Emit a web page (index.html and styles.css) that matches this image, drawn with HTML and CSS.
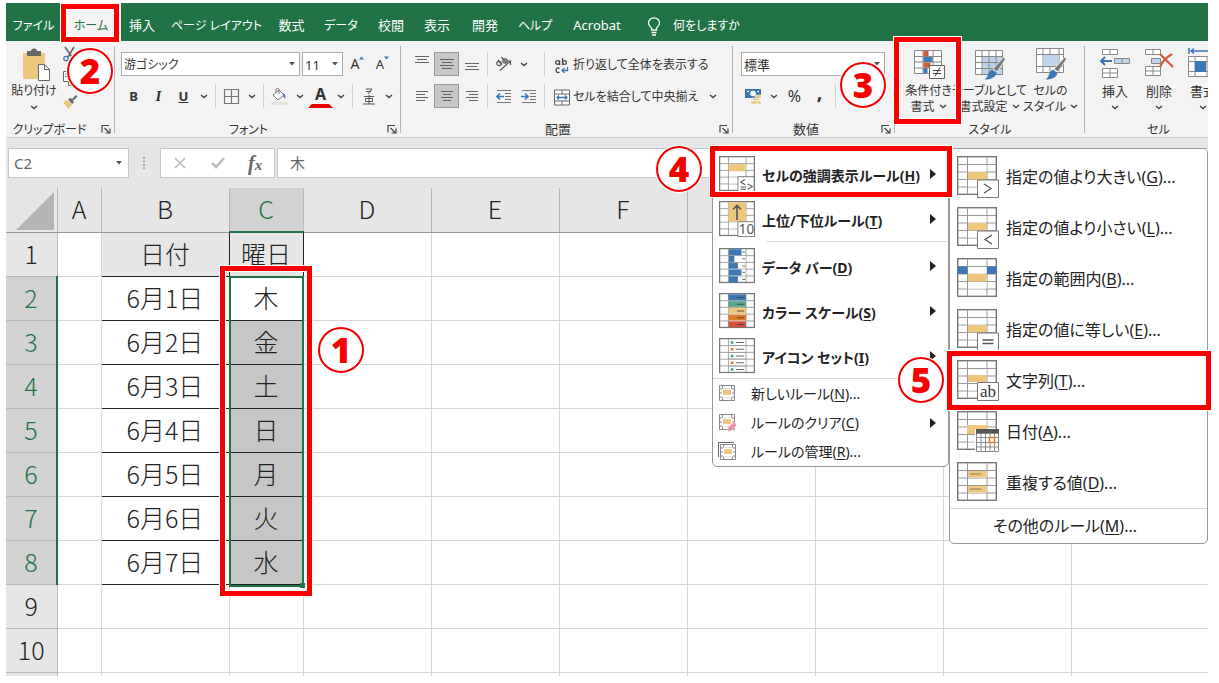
FILE: index.html
```
<!DOCTYPE html>
<html lang="ja">
<head>
<meta charset="utf-8">
<title>条件付き書式</title>
<link rel="stylesheet" href="styles.css">
</head>
<body>
<svg class="defs" aria-hidden="true">
  <symbol id="caret" viewBox="0 0 8 5"><path d="M1 1l3 2.6L7 1" fill="none" stroke="#444" stroke-width="1.4"/></symbol>
  <symbol id="tri" viewBox="0 0 6 4"><path d="M0 0h6L3 3.5z" fill="#555"/></symbol>
  <symbol id="sub" viewBox="0 0 6 10"><path d="M0 0l6 5-6 5z" fill="#222"/></symbol>
  <symbol id="launch" viewBox="0 0 10 10"><path d="M1 8.500V1.500h7M3.500 4l4.500 4.500M9 4.500V9H4.500" fill="none" stroke="#444" stroke-width="1.200"/></symbol>
  <symbol id="grid" viewBox="0 0 40 40"><rect x=".7" y=".7" width="38.600" height="37.600" fill="#fff" stroke="#777" stroke-width="1.400"/><path d="M1 8.500h38M1 16h38M1 23.500h38M1 31h38M10.500 1v37M30 1v37" stroke="#999" fill="none"/><path d="M11 9h18.500v6.500H11zM11 24h18.500v6.500H11z" fill="#fff"/></symbol>
  <symbol id="mini" viewBox="0 0 17 17"><path d="M.5.500h15v15H.5zM.5 4h15M.5 8h15M.5 12h15M3.500.500v15M12.500.500v15" fill="#fff" stroke="#888"/><path d="M3 3.500h10v9H3z" fill="#fff"/><path d="M4 5h8v5H4z" fill="#edc77e"/></symbol>
</svg>
<div class="page">
<div class="app">
  <nav class="tabs">
    <button class="kana">ファイル</button><button class="on kana">ホーム</button><button>挿入</button><button class="kana">ページ レイアウト</button><button>数式</button><button class="kana">データ</button><button>校閲</button><button>表示</button><button>開発</button><button class="kana">ヘルプ</button><button>Acrobat</button>
    <button class="ask kana"><svg width="14" height="19" viewBox="0 0 14 19"><path d="M4.500 13v-2C3 9.500 1.500 8.500 1.500 6a5.500 5.200 0 0 1 11 0c0 2.500-1.500 3.500-3 5v2zM4.500 15.500h5M5 18h4" fill="none" stroke="#fff" stroke-width="1.300"/></svg>何をしますか</button>
  </nav>

  <div class="ribbon">
    <section class="group clip">
      <div class="body">
        <button class="big paste"><svg width="29" height="33" viewBox="0 0 29 33"><path d="M1 4h22v26H1z" fill="#edc77e"/><path d="M5 2h4a3 2.500 0 0 1 6 0h4v5H5z" fill="#666"/><path d="M16.500 15.500h6l5 5v11h-11z" fill="#fff" stroke="#666"/><path d="M22.500 15.500v5h5" fill="none" stroke="#666"/></svg><span>貼り付け</span><svg class="caret"><use href="#caret"/></svg></button>
        <div class="stack">
          <button aria-label="切り取り"><svg width="16" height="16" viewBox="0 0 16 16"><path d="M3 1l7 10M12 1L6 11" stroke="#666" stroke-width="1.600"/><circle cx="4" cy="12.500" r="2.200" fill="none" stroke="#3d78b5" stroke-width="1.300"/><circle cx="11.500" cy="12.500" r="2.200" fill="none" stroke="#3d78b5" stroke-width="1.300"/></svg></button>
          <button aria-label="コピー"><svg width="16" height="16" viewBox="0 0 16 16"><path d="M1.500 1.500h7v10h-7zM6.500 4.500h5l3 3v8h-8z" fill="#fff" stroke="#666"/><path d="M3 4h3M3 6.500h3M8.500 9h4M8.500 11.500h4" stroke="#3d78b5"/></svg></button>
          <button aria-label="書式のコピー"><svg width="16" height="16" viewBox="0 0 16 16"><path d="M1 8l5-2 4 5-4 4c-1-2-3-5-5-7z" fill="#edc77e"/><path d="M6 5l4 5 2-2-3-4zM10 5l4-4 1.500 1.500-4 4z" fill="#666"/></svg></button>
        </div>
      </div>
      <footer class="kana">クリップボード<button class="launch" aria-label="クリップボードの設定"><svg><use href="#launch"/></svg></button></footer>
    </section>

    <section class="group font">
      <div class="body rows">
        <div class="row">
          <label class="combo wide"><select class="kana" aria-label="フォント"><option>游ゴシック</option></select><svg><use href="#tri"/></svg></label>
          <label class="combo size"><select aria-label="サイズ"><option>11</option></select><svg><use href="#tri"/></svg></label>
          <button class="w24 grow">A<svg width="5" height="4" viewBox="0 0 5 4"><path d="M0 3.500L2.500.5 5 3.500z" fill="#3d78b5"/></svg></button>
          <button class="w24 grow small">A<svg width="5" height="4" viewBox="0 0 5 4"><path d="M0 .5L2.500 3.500 5 .5z" fill="#3d78b5"/></svg></button>
        </div>
        <div class="row">
          <button class="w24"><b>B</b></button><button class="w24"><i>I</i></button><button class="w24"><u><b>U</b></u></button><button class="w14" aria-label="下線"><svg class="caret"><use href="#caret"/></svg></button><hr>
          <button class="w24" aria-label="罫線"><svg width="15" height="15" viewBox="0 0 15 15"><path d="M.5.500h14v14H.5zM7.500.500v14M.5 7.500h14" fill="none" stroke="#777" stroke-width="1.200"/></svg></button><button class="w14" aria-label="罫線の種類"><svg class="caret"><use href="#caret"/></svg></button><hr>
          <button class="w24" aria-label="塗りつぶし"><svg width="17" height="17" viewBox="0 0 17 17"><path d="M2 7l6-5 5 5-6 5zM5 5V2a1.500 1.500 0 0 1 3 0v4" fill="#fff" stroke="#777"/><path d="M12 5c2 1 3 3 2 6l-2-3z" fill="#3d78b5"/><path d="M0 14h17v3H0z" fill="#e2e2e2"/></svg></button><button class="w14" aria-label="塗りつぶしの色"><svg class="caret"><use href="#caret"/></svg></button>
          <button class="w24 fcolor"><b>A</b></button><button class="w14" aria-label="文字の色"><svg class="caret"><use href="#caret"/></svg></button><hr>
          <button class="w24" aria-label="ふりがな"><svg width="12" height="17" viewBox="0 0 12 17"><path d="M3 1h6L5 6M3 3.500h5M1 8.500h10M0 16h12M6 7v9M2.500 10.500h7v3h-7z" fill="none" stroke="#555"/></svg></button><button class="w14" aria-label="ふりがなの表示"><svg class="caret"><use href="#caret"/></svg></button>
        </div>
      </div>
      <footer class="kana">フォント<button class="launch" aria-label="フォントの設定"><svg><use href="#launch"/></svg></button></footer>
    </section>

    <section class="group align">
      <div class="body rows">
        <div class="row">
          <button class="w24" aria-label="上揃え"><svg width="16" height="16" viewBox="0 0 16 16"><path d="M1 .5h14M3 3.500h10M1 6.500h14" stroke="#666"/></svg></button><button class="w24 sel" aria-label="上下中央揃え"><svg width="16" height="16" viewBox="0 0 16 16"><path d="M1 3.500h14M3 6.500h10M1 9.500h14M3 12.500h10" stroke="#666"/></svg></button><button class="w24" aria-label="下揃え"><svg width="16" height="16" viewBox="0 0 16 16"><path d="M1 7.500h14M3 10.500h10M1 13.500h14" stroke="#666"/></svg></button><hr>
          <button class="w24" aria-label="方向"><svg width="17" height="16" viewBox="0 0 17 16"><g fill="none" stroke="#555" stroke-width="1.200"><circle cx="4" cy="7.500" r="2.200"/><path d="M3 4l4 4.500M6.500 1l5 6"/><circle cx="10" cy="5" r="2.200"/><path d="M5 14.500l10-9M11.500 5H15.500v4"/></g></svg></button><button class="w14" aria-label="文字の方向"><svg class="caret"><use href="#caret"/></svg></button><hr class="far">
          <button class="text"><svg width="16" height="17" viewBox="0 0 16 17"><g fill="none" stroke="#444" stroke-width="1.200"><circle cx="3.500" cy="5.500" r="1.900"/><path d="M5.600 3.500V8M8.500 1v7"/><circle cx="10.500" cy="5.500" r="1.900"/><path d="M5.500 11.500a2.200 2.200 0 1 0 0 3.500"/></g><path d="M13.500 10v3.500H8M10.500 11L8 13.500l2.500 2.500" fill="none" stroke="#3d78b5" stroke-width="1.300"/></svg>折り返して全体を表示する</button>
        </div>
        <div class="row">
          <button class="w24" aria-label="左揃え"><svg width="16" height="16" viewBox="0 0 16 16"><path d="M2 3.500h12M2 6.500h9M2 9.500h12M2 12.500h9" stroke="#666"/></svg></button><button class="w24 sel" aria-label="中央揃え"><svg width="16" height="16" viewBox="0 0 16 16"><path d="M2 3.500h12M4 6.500h8M2 9.500h12M4 12.500h8" stroke="#666"/></svg></button><button class="w24" aria-label="右揃え"><svg width="16" height="16" viewBox="0 0 16 16"><path d="M2 3.500h12M5 6.500h9M2 9.500h12M5 12.500h9" stroke="#666"/></svg></button><hr>
          <button class="w24" aria-label="インデントを減らす"><svg width="16" height="16" viewBox="0 0 16 16"><path d="M1 2.500h14M9 5.500h6M9 8.500h6M9 11.500h6M1 14.500h14" stroke="#777"/><path d="M8 8.500H1M4 5.500l-3 3 3 3" fill="none" stroke="#3d78b5" stroke-width="1.700"/></svg></button><button class="w24" aria-label="インデントを増やす"><svg width="16" height="16" viewBox="0 0 16 16"><path d="M1 2.500h14M9 5.500h6M9 8.500h6M9 11.500h6M1 14.500h14" stroke="#777"/><path d="M0 8.500h7M4 5.500l3 3-3 3" fill="none" stroke="#3d78b5" stroke-width="1.700"/></svg></button><hr>
          <button class="text"><svg width="16" height="17" viewBox="0 0 16 17"><path d="M.5 1h15v15H.5zM.5 5h15M.5 12h15M8 1v4M8 12v4" fill="#fff" stroke="#666"/><path d="M3 8.500h10M5 6.500l-2 2 2 2M11 6.500l2 2-2 2" fill="none" stroke="#3d78b5" stroke-width="1.300"/></svg>セルを結合して中央揃え</button><button class="w14 end" aria-label="結合の種類"><svg class="caret"><use href="#caret"/></svg></button>
        </div>
      </div>
      <footer>配置<button class="launch" aria-label="配置の設定"><svg><use href="#launch"/></svg></button></footer>
    </section>

    <section class="group num">
      <div class="body rows">
        <div class="row"><label class="combo fill"><select aria-label="表示形式"><option>標準</option></select><svg><use href="#tri"/></svg></label></div>
        <div class="row">
          <button class="w24" aria-label="通貨"><svg width="17" height="17" viewBox="0 0 17 17"><path d="M0 1h16v9H0z" fill="#3d78b5"/><circle cx="8" cy="5.500" r="2.800" fill="#fff"/><path d="M2 3h2v1H2zM12 3h2v1h-2z" fill="#fff"/><path d="M10 7h6v2.500h-6zM8 10h6v2.500H8zM6 13h6v3H6zM12 13h4v3h-4z" fill="#edc77e" stroke="#f3f3f3" stroke-width=".5"/></svg></button><button class="w14" aria-label="通貨の種類"><svg class="caret"><use href="#caret"/></svg></button>
          <button class="w24 pct">%</button><button class="w24 comma"><b>,</b></button><hr>
          <button class="w18" aria-label="小数点以下の表示桁数を増やす"><svg width="15" height="14" viewBox="0 0 15 14"><path d="M6 2H0M3 0L0 2l3 2" fill="none" stroke="#3d78b5" stroke-width="1.300"/><g fill="none" stroke="#555"><ellipse cx="6" cy="10.500" rx="1.500" ry="2.500"/><ellipse cx="11" cy="10.500" rx="1.500" ry="2.500"/></g></svg></button><button class="w18" aria-label="小数点以下の表示桁数を減らす"><svg width="15" height="14" viewBox="0 0 15 14"><g fill="none" stroke="#555"><ellipse cx="8" cy="3.500" rx="1.500" ry="2.500"/><ellipse cx="13" cy="3.500" rx="1.500" ry="2.500"/></g><path d="M0 11h6M3 9l3 2-3 2" fill="none" stroke="#3d78b5" stroke-width="1.300"/></svg></button>
        </div>
      </div>
      <footer>数値<button class="launch" aria-label="数値の設定"><svg><use href="#launch"/></svg></button></footer>
    </section>

    <section class="group style">
      <div class="body kana">
        <button class="big"><svg width="32" height="33" viewBox="0 0 32 33"><path d="M1.500 2.500h27v23h-27zM1.500 8.500h27M1.500 14h27M1.500 20h27M10 2.500v23M20 2.500v23" fill="#fff" stroke="#888"/><path d="M10.500 3h5v5h-5zM10.500 14.500h7v5h-7z" fill="#d05a3c"/><path d="M10.500 9h9v5h-9zM10.500 20h4v5h-4z" fill="#3d78b5"/><path d="M16.500 17.500h15v13h-15z" fill="#fff" stroke="#666"/><path d="M20 22.500h8M20 25.500h8M27 19.500l-5 9" stroke="#444"/></svg><span>条件付き</span><span>書式 <svg class="caret"><use href="#caret"/></svg></span></button>
        <button class="big"><svg width="32" height="33" viewBox="0 0 32 33"><path d="M1.500 2.500h27v24h-27z" fill="#fff"/><path d="M8 8h20v18H8z" fill="#bfd4ea"/><path d="M1.500 2.500h27v24h-27zM1.500 8.500h27M1.500 14.500h27M1.500 20.500h27M8 2.500v24M15 2.500v24M22 2.500v24" fill="none" stroke="#888"/><path d="M30 9l1.500 2L23 24l-4-3z" fill="#777" stroke="#fff" stroke-width=".7"/><path d="M18 21.500l4.500 3.500c-1 5-7 6.500-12 6.500 4-2 3-8 7.500-10z" fill="#3d78b5"/></svg><span>テーブルとして</span><span>書式設定 <svg class="caret"><use href="#caret"/></svg></span></button>
        <button class="big"><svg width="32" height="33" viewBox="0 0 32 33"><path d="M1.500.500h27v24h-27zM1.500 6.500h27M1.500 18.500h27M8 .5v24M24 .5v24M15 .5v6M15 18.500v6" fill="#fff" stroke="#888"/><path d="M8.500 7h15v11h-15z" fill="#bfd4ea"/><path d="M30 9l1.500 2L23 24l-4-3z" fill="#777" stroke="#fff" stroke-width=".7"/><path d="M18 21.500l4.500 3.500c-1 5-7 6.500-12 6.500 4-2 3-8 7.500-10z" fill="#3d78b5"/></svg><span>セルの</span><span>スタイル <svg class="caret"><use href="#caret"/></svg></span></button>
      </div>
      <footer class="kana">スタイル</footer>
    </section>

    <section class="group cells">
      <div class="body">
        <button class="big"><svg width="32" height="33" viewBox="0 0 32 33"><path d="M3.500 1.500h15v5h-15zM11 1.500v5M3.500 20.500h15v9h-15zM3.500 25h15M11 20.500v9" fill="#fff" stroke="#888"/><path d="M15.500 10.500h15v5h-15zM23 10.500v5" fill="#bfd4ea" stroke="#888"/><path d="M13 13H2M6 9l-4 4 4 4" fill="none" stroke="#3d78b5" stroke-width="2"/></svg><span>挿入</span><svg class="caret"><use href="#caret"/></svg></button>
        <button class="big"><svg width="32" height="33" viewBox="0 0 32 33"><path d="M2.500 1.500h15v5h-15zM10 1.500v5M2.500 18.500h15v9h-15zM2.500 23h15M10 18.500v9" fill="#fff" stroke="#888"/><path d="M8.500 10.500h9v5h-9z" fill="#bfd4ea" stroke="#888"/><path d="M17 6l13 13M29 6c-5 3-10 8-12 13" fill="none" stroke="#d05a3c" stroke-width="2.200"/></svg><span>削除</span><svg class="caret"><use href="#caret"/></svg></button>
        <button class="big"><svg width="32" height="33" viewBox="0 0 32 33"><path d="M2 0v6M30 0v6M4 3h24M7 .5L4 3l3 2.500" fill="none" stroke="#3d78b5" stroke-width="1.500"/><path d="M1.500 8.500h27v20h-27zM1.500 13.500h27M1.500 23.500h27M8 8.500v20M20 8.500v20" fill="#fff" stroke="#888"/><path d="M8 13h11v11H8z" fill="#3d78b5"/></svg><span>書式</span><svg class="caret"><use href="#caret"/></svg></button>
      </div>
      <footer class="kana">セル</footer>
    </section>
  </div>

  <div class="fbar">
    <label class="name"><input aria-label="名前ボックス" value="C2"><svg><use href="#tri"/></svg></label>
    <svg class="dots" width="4" height="12" viewBox="0 0 4 12"><path d="M1 0h2v2H1zM1 3.500h2v2H1zM1 7h2v2H1zM1 10.500h2v1.500H1z" fill="#aaa"/></svg>
    <div class="fx">
      <button aria-label="キャンセル"><svg width="14" height="12" viewBox="0 0 14 12"><path d="M2 1l10 10M12 1L2 11" stroke="#bbb" stroke-width="1.600"/></svg></button>
      <button aria-label="入力"><svg width="16" height="12" viewBox="0 0 16 12"><path d="M2 6l4 4 8-9" fill="none" stroke="#bbb" stroke-width="2.600"/></svg></button>
      <button class="fn"><i>f</i><i class="x">x</i></button>
    </div>
    <input class="formula" aria-label="数式バー" value="木">
  </div>

  <table class="sheet">
    <colgroup><col class="c-h"><col class="c-a"><col><col class="c-c"><col><col><col><col><col><col><col class="c-last"></colgroup>
    <thead><tr><th class="corner"><svg width="38" height="38" viewBox="0 0 38 38"><path d="M38 0v38H0z" fill="#b5b5b5"/></svg></th><th>A</th><th>B</th><th class="on">C</th><th>D</th><th>E</th><th>F</th><th></th><th></th><th></th><th></th></tr></thead>
    <tbody>
      <tr><th>1</th><td></td><td class="k h">日付</td><td class="k h">曜日</td><td></td><td></td><td></td><td></td><td></td><td></td><td></td></tr>
      <tr><th class="on">2</th><td></td><td class="k">6月1日</td><td class="k">木</td><td></td><td></td><td></td><td></td><td></td><td></td><td></td></tr>
      <tr><th class="on">3</th><td></td><td class="k">6月2日</td><td class="k s">金</td><td></td><td></td><td></td><td></td><td></td><td></td><td></td></tr>
      <tr><th class="on">4</th><td></td><td class="k">6月3日</td><td class="k s">土</td><td></td><td></td><td></td><td></td><td></td><td></td><td></td></tr>
      <tr><th class="on">5</th><td></td><td class="k">6月4日</td><td class="k s">日</td><td></td><td></td><td></td><td></td><td></td><td></td><td></td></tr>
      <tr><th class="on">6</th><td></td><td class="k">6月5日</td><td class="k s">月</td><td></td><td></td><td></td><td></td><td></td><td></td><td></td></tr>
      <tr><th class="on">7</th><td></td><td class="k">6月6日</td><td class="k s">火</td><td></td><td></td><td></td><td></td><td></td><td></td><td></td></tr>
      <tr><th class="on">8</th><td></td><td class="k">6月7日</td><td class="k s">水</td><td></td><td></td><td></td><td></td><td></td><td></td><td></td></tr>
      <tr><th>9</th><td></td><td></td><td></td><td></td><td></td><td></td><td></td><td></td><td></td><td></td></tr>
      <tr><th>10</th><td></td><td></td><td></td><td></td><td></td><td></td><td></td><td></td><td></td><td></td></tr>
      <tr class="cut"><th></th><td></td><td></td><td></td><td></td><td></td><td></td><td></td><td></td><td></td><td></td></tr>
    </tbody>
  </table>
  <div class="range"></div>
</div>

<div class="menu rules">
  <button class="l"><svg class="ic" viewBox="0 0 40 40"><use href="#grid"/><path d="M11 9h18.500v8H11z" fill="#edc77e"/><path d="M21 23h18v17H21z" fill="#fff" stroke="#777"/><path d="M29 26l-5 3 5 3M24 34.500h6M24 37h6M32 31l5 3-5 3" fill="none" stroke="#555" stroke-width="1.200"/></svg><span>セルの強調表示ルール(<u>H</u>)</span><svg class="sub"><use href="#sub"/></svg></button>
  <button class="l"><svg class="ic" viewBox="0 0 40 40"><use href="#grid"/><path d="M10.500 1.500H30V23H10.500z" fill="#edc77e"/><path d="M20 21V5M15.500 9.500L20 5l4.500 4.500" fill="none" stroke="#555" stroke-width="1.800"/><path d="M21 23h18.500v16.500H21z" fill="#fff" stroke="#777"/><text class="ten" x="22" y="37" fill="#555">10</text></svg><span>上位/下位ルール(<u>T</u>)</span><svg class="sub"><use href="#sub"/></svg></button>
  <hr class="in">
  <button class="l"><svg class="ic" viewBox="0 0 40 40"><use href="#grid"/><path d="M11 1.500h14V8H11zM11 9h6v6.500h-6zM11 16.500h10V23H11zM11 24h14v6.500H11zM11 31.500h10V38H11z" fill="#3d78b5"/><path d="M26 4.500h3M26 12h3M26 20h3M26 27h3M26 35h3" stroke="#555"/></svg><span>データ バー(<u>D</u>)</span><svg class="sub"><use href="#sub"/></svg></button>
  <button class="l"><svg class="ic" viewBox="0 0 40 40"><use href="#grid"/><path d="M10.500 1.500H30V8H10.500z" fill="#3d78b5"/><path d="M10.500 9H30v6.500H10.500z" fill="#5fa58c"/><path d="M10.500 16.500H30V23H10.500z" fill="#edc77e"/><path d="M10.500 24H30v6.500H10.500z" fill="#e07b28"/><path d="M10.500 31.500H30V38H10.500z" fill="#d4523a"/><path d="M20 5h8M20 12.500h8M20 20h8M20 27.500h8M20 35h8" stroke="#444"/></svg><span>カラー スケール(<u>S</u>)</span><svg class="sub"><use href="#sub"/></svg></button>
  <button class="l"><svg class="ic" viewBox="0 0 40 40"><use href="#grid"/><path d="M11 8.500h19M11 16h19M11 23.500h19M11 31h19" stroke="#999"/><path d="M19 5h9M19 12.500h9M19 20h9M19 27.500h9M19 35h9" stroke="#555"/><path d="M13 3.500h3v3h-3zM13 18.500h3v3h-3zM13 33.500h3v3h-3z" fill="#4d9a80"/><path d="M13 11h3v3h-3zM13 26h3v3h-3z" fill="#e07b28"/></svg><span>アイコン セット(<u>I</u>)</span><svg class="sub"><use href="#sub"/></svg></button>
  <hr>
  <button class="s"><svg class="mi" viewBox="0 0 17 17"><use href="#mini"/></svg><span>新しいルール(<u>N</u>)...</span></button>
  <button class="s"><svg class="mi" viewBox="0 0 17 17"><use href="#mini"/><path d="M9 13l6-5 3 3-6 6-3 1z" fill="#ee8fa5" stroke="#fff" stroke-width=".6"/></svg><span>ルールのクリア(<u>C</u>)</span><svg class="sub"><use href="#sub"/></svg></button>
  <button class="s"><svg class="mi" viewBox="0 0 17 17"><path d="M-.5 14V-.5H15" fill="none" stroke="#666"/><svg x="1" y="1" width="17" height="17"><use href="#mini"/></svg></svg><span>ルールの管理(<u>R</u>)...</span></button>
</div>

<div class="menu highlight">
  <button><svg class="ic" viewBox="0 0 42 42"><use href="#grid" width="40" height="40"/><path d="M11 16h18.500v7.500H11z" fill="#edc77e"/><path d="M20.500 24h21v17.500h-21z" fill="#fff" stroke="#777"/><path d="M27 28l7 4.500-7 4.500" fill="none" stroke="#555" stroke-width="1.300"/></svg><span>指定の値より大きい(<u>G</u>)...</span></button>
  <button><svg class="ic" viewBox="0 0 42 42"><use href="#grid" width="40" height="40"/><path d="M11 16h18.500v7.500H11z" fill="#edc77e"/><path d="M20.500 24h21v17.500h-21z" fill="#fff" stroke="#777"/><path d="M35 28l-7 4.500 7 4.500" fill="none" stroke="#555" stroke-width="1.300"/></svg><span>指定の値より小さい(<u>L</u>)...</span></button>
  <button><svg class="ic" viewBox="0 0 42 42"><use href="#grid" width="40" height="40"/><path d="M11 16h18.500v7.500H11z" fill="#edc77e"/><path d="M1 8.500h9.500V16H1zM30 8.500h9.500V16H30z" fill="#3d78b5"/></svg><span>指定の範囲内(<u>B</u>)...</span></button>
  <button><svg class="ic" viewBox="0 0 42 42"><use href="#grid" width="40" height="40"/><path d="M11 16h18.500v7.500H11z" fill="#edc77e"/><path d="M20.500 24h21v17.500h-21z" fill="#fff" stroke="#777"/><path d="M25.500 31h11M25.500 34.500h11" stroke="#555" stroke-width="1.300"/></svg><span>指定の値に等しい(<u>E</u>)...</span></button>
  <button><svg class="ic" viewBox="0 0 42 42"><use href="#grid" width="40" height="40"/><path d="M11 15h18.500v7H11z" fill="#edc77e"/><path d="M20.500 22.500h21v18h-21z" fill="#fff" stroke="#777"/><text class="ab" x="23" y="37" fill="#333">ab</text></svg><span>文字列(<u>T</u>)...</span></button>
  <button><svg class="ic" viewBox="0 0 42 42"><use href="#grid" width="40" height="40"/><path d="M10 14h21v9H10z" fill="#edc77e"/><path d="M18 18h24v24H18z" fill="#fff"/><path d="M19.500 22v18.500h22V22zM19.500 26.500h22M19.500 31.500h22M19.500 36h22M24 22v18M28.500 22v18M33 22v18M37.500 22v18" fill="none" stroke="#888"/><path d="M19 18h23v4.500H19z" fill="#555"/><path d="M32.500 26.500h5v5h-5z" fill="#fff" stroke="#e07b28" stroke-width="1.500"/></svg><span>日付(<u>A</u>)...</span></button>
  <button><svg class="ic" viewBox="0 0 42 42"><use href="#grid" width="40" height="40"/><path d="M11 9h18.500v6.500H11zM11 24h18.500v6.500H11z" fill="#edc77e"/><path d="M13 12h11M13 27h11" stroke="#8a7a5c"/></svg><span>重複する値(<u>D</u>)...</span></button>
  <hr>
  <button class="more"><span>その他のルール(<u>M</u>)...</span></button>
</div>

<div class="box b1"></div><div class="box b2"></div><div class="box b3"></div><div class="box b4"></div><div class="box b5"></div>
<div class="step s1">1</div><div class="step s2">2</div><div class="step s3">3</div><div class="step s4">4</div><div class="step s5">5</div>
</div>
</body>
</html>
```
FILE: styles.css
```
* { box-sizing: border-box; }
body { margin: 0; background: #fff; color: #333; font: 13px/16px "Noto Sans", "Noto Sans CJK JP", sans-serif; }
button, input, select { font: inherit; color: inherit; background: none; border: 0; padding: 0; margin: 0; white-space: nowrap; border-radius: 0; }
button, select { font-feature-settings: "palt"; }
svg { display: block; flex: none; overflow: visible; }
.kana { font-size: 12px; }
.defs { position: absolute; width: 0; height: 0; }
.page { position: relative; padding: 3px 11px 6px 6px; overflow: hidden; }
.app { position: relative; overflow: hidden; background: #e6e6e6; }

.tabs { display: grid; grid-template-columns: 55px 60px 42px 107px 43px 56px 44px 48px 48px 52px 72px auto; justify-content: start; height: 38px; background: #217346; color: #fff; }
.tabs button { padding-top: 6px; }
.tabs .kana { padding-top: 8px; }
.tabs .on { background: #f3f3f3; color: #217346; }
.tabs .ask { display: flex; align-items: center; gap: 12px; padding-left: 14px; }

.ribbon { display: flex; height: 97px; background: #f3f3f3; border-bottom: 1px solid #d0d0d0; overflow: hidden; }
.group { position: relative; flex: none; display: flex; flex-direction: column; padding: 5px 6px 0; }
.group::after { content: ""; position: absolute; right: 0; top: 5px; bottom: 4px; width: 1px; background: #b5b5b5; }
.group footer { display: flex; justify-content: center; align-items: center; height: 18px; padding-top: 2px; font-feature-settings: "palt"; }
.group .kana:last-child { padding-top: 4px; }
.launch { position: absolute; right: 4px; bottom: 3px; }
.launch svg { width: 10px; height: 10px; }
.clip { width: 109px; padding-left: 0; }
.clip footer { padding-right: 16px; }
.font { width: 286px; padding-right: 0; }
.font footer { padding-right: 25px; }
.align { width: 332px; padding-left: 8px; }
.align footer { padding-right: 20px; }
.num { width: 162px; padding: 5px 8px 0; }
.num footer { padding-right: 16px; }
.style { width: 190px; padding: 5px 3px 0; }
.cells { width: 147px; padding: 5px 8px 0; }
.body { display: flex; height: 74px; }
.rows { flex-direction: column; gap: 8px; padding-top: 6px; }
.row { display: flex; align-items: center; height: 24px; }
.row hr { width: 1px; height: 24px; border: 0; margin: 0 3px; background: #d0d0d0; }
.row hr.far { margin-left: 12px; }
.row button { display: flex; align-items: center; justify-content: center; height: 24px; flex: none; }
.w24 { width: 25px; }
.w14 { width: 16px; }
.w18 { width: 18px; }
.row .text { gap: 3px; padding: 2px 0 0 6px; font-size: 12px; }
.row .end { margin-left: auto; margin-right: 6px; }
.row .sel { background: #c8c8c8; border: 1px solid #999; }
.row .grow { align-items: flex-start; padding-top: 4px; font-size: 14px; }
.row .grow.small { font-size: 13px; }
.row i { font-family: "Liberation Serif", serif; font-weight: bold; font-size: 15px; }
.row .fcolor { border: 4px solid transparent; border-top: 0; border-bottom-color: #e00; font-size: 16px; }
.row .pct { font-size: 16px; }
.row .comma { font-size: 20px; padding-bottom: 8px; }
.caret { width: 8px; height: 5px; }
.combo { position: relative; display: block; height: 24px; background: #fff; border: 1px solid #ababab; margin-right: 2px; }
.combo select { appearance: none; width: 100%; height: 22px; padding: 2px 0 0 2px; }
.combo svg { position: absolute; right: 4px; top: 9px; width: 6px; height: 4px; pointer-events: none; }
.wide { width: 179px; }
.size { width: 41px; }
.fill { width: 146px; }
.big { display: flex; flex-direction: column; align-items: center; flex: none; }
.big span { display: flex; align-items: center; gap: 4px; }
.big svg:first-child { margin-bottom: 2px; }
.big > .caret { margin-top: 6px; }
.paste { width: 56px; padding-top: 3px; font-size: 12px; }
.paste svg:first-child { margin-left: 4px; margin-bottom: 1px; }
.style .big, .cells .big { padding-top: 2px; }
.style .big { width: 61px; }
.cells .big { width: 44px; }
.stack { display: flex; flex-direction: column; gap: 8px; }

.fbar { display: flex; align-items: center; height: 50px; padding: 0 0 1px 2px; font-size: 15px; color: #666; }
.name, .fx, .formula { height: 30px; background: #fff; border: 1px solid #c8c8c8; }
.name { position: relative; width: 121px; }
.name input { width: 100px; height: 28px; padding-left: 5px; }
.name svg { position: absolute; right: 6px; top: 12px; width: 6px; height: 4px; }
.dots { margin: 0 14px 0 13px; }
.fx { display: flex; width: 115px; margin-right: 2px; }
.fx button { flex: 1; display: flex; align-items: center; justify-content: center; }
.fn { font: bold 20px/20px "Liberation Serif", serif; }
.fn .x { font-size: 15px; padding-top: 4px; }
.formula { flex: 1; min-width: 0; padding-left: 12px; border-right: 0; }

.sheet { width: 100%; table-layout: fixed; border-collapse: collapse; background: #fff; color: #222; font: 300 25px/32px "Noto Sans CJK JP", sans-serif; text-align: center; }
.sheet col { width: 128px; }
.sheet .c-h { width: 51px; }
.sheet .c-a { width: 44px; }
.sheet .c-c { width: 74px; }
.sheet .c-last { width: auto; }
.sheet th, .sheet td { height: 44px; padding: 0 0 3px; border: 1px solid #d6d6d6; }
.sheet th { background: #e6e6e6; font-weight: 300; border-color: #b8b8b8; }
.sheet tr > :first-child { border-left: 0; }
.sheet tr > :last-child { border-right: 0; }
.sheet thead th { border-top: 0; border-bottom: 1px solid #999; }
.sheet thead .on { background: #d2d2d2; color: #217346; border-bottom: 2px solid #217346; }
.sheet tbody .on { background: #d2d2d2; color: #217346; border-right: 2px solid #217346; }
.sheet .corner { padding: 0; }
.sheet .corner svg { margin: 2px 0 0 10px; }
.sheet .k { border: 1px solid #222; }
.sheet .h { background: #e6e6e6; }
.sheet .s { background: #c6c6c6; }
.sheet .cut th, .sheet .cut td { height: 4px; padding: 0; border-bottom: 0; }
.range { position: absolute; left: 223px; top: 273px; width: 75px; height: 311px; border: 2px solid #217346; }
.range::after { content: ""; position: absolute; right: -3px; bottom: -3px; width: 5px; height: 5px; background: #217346; }

.menu { position: absolute; top: 148px; display: flex; flex-direction: column; background: #fff; border: 1px solid #999; border-radius: 5px; padding-top: 2px; color: #222; }
.menu button { display: flex; align-items: center; text-align: left; }
.menu hr { width: 100%; height: 1px; border: 0; margin: 0; background: #d8d8d8; }
.menu u { text-underline-offset: 2px; }
.rules { left: 712px; width: 237px; }
.rules .in { width: 181px; margin: 0 0 1px 53px; }
.rules .l { height: 45px; padding: 0 12px 0 6px; font-size: 14px; font-weight: bold; }
.rules .l .ic { width: 36px; height: 36px; margin-right: 7px; }
.rules .l span { padding-top: 5px; }
.rules .s { height: 29px; padding: 0 12px 0 6px; font-size: 14px; }
.rules .mi { width: 17px; height: 17px; margin-right: 15px; }
.sub { width: 6px; height: 10px; margin-left: auto; }
.ten { font-size: 15px; font-weight: normal; }
.highlight { left: 949px; width: 259px; }
.highlight button { height: 51px; padding-left: 7px; font-size: 16px; }
.highlight .ic { width: 42px; height: 42px; margin-right: 7px; }
.highlight .more { height: 34px; padding-left: 43px; }
.ab { font: 17px "Liberation Serif", serif; }

.box { position: absolute; border: 5px solid #f80000; box-shadow: 0 0 0 1px #fff, inset 0 0 0 1px #fff; pointer-events: none; }
.b1 { left: 220px; top: 266px; width: 92px; height: 330px; }
.b2 { left: 61px; top: 4px; width: 58px; height: 38px; }
.b3 { left: 894px; top: 37px; width: 67px; height: 87px; }
.b4 { left: 710px; top: 146px; width: 242px; height: 51px; }
.b5 { left: 947px; top: 351px; width: 264px; height: 59px; }
.step { position: absolute; width: 46px; height: 46px; border: 2px solid #f00000; border-radius: 50%; background: #fff; color: #f80000; box-shadow: 0 0 0 1px #fff; font: 900 35px/42px "Noto Sans", sans-serif; text-align: center; }
.s1 { left: 318px; top: 327px; }
.s2 { left: 67px; top: 48px; }
.s3 { left: 840px; top: 62px; }
.s4 { left: 656px; top: 146px; }
.s5 { left: 898px; top: 357px; }
```
